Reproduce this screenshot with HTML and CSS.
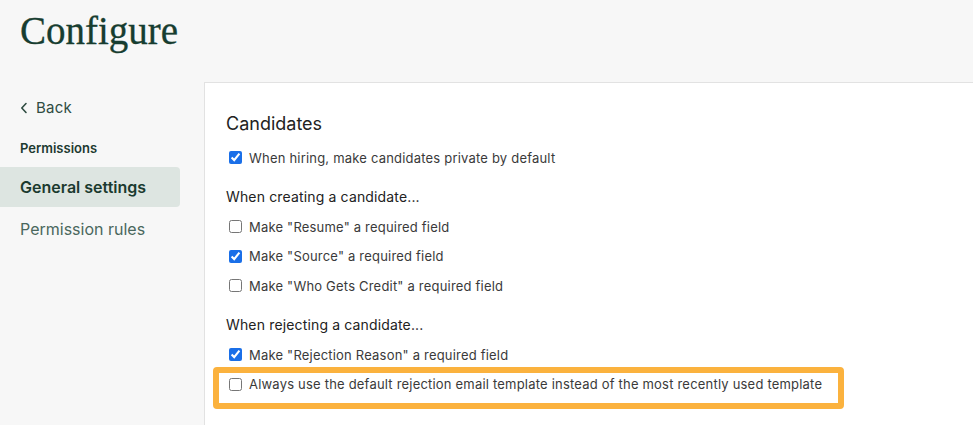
FILE: index.html
```html
<!DOCTYPE html>
<html lang="en">
<head>
<meta charset="utf-8">
<title>Configure</title>
<link rel="stylesheet" href="styles.css">
</head>
<body>
<header class="page-header">
  <h1 class="page-title">Configure</h1>
</header>
<div class="layout">
  <aside class="sidebar">
    <a class="back-link" href="#">
      <svg class="chev" width="8" height="12" viewBox="0 0 8 12" aria-hidden="true"><path d="M6 1.5 L1.8 6 L6 10.5" fill="none" stroke="currentColor" stroke-width="1.6" stroke-linecap="round" stroke-linejoin="round"/></svg>
      <span>Back</span>
    </a>
    <div class="side-heading">Permissions</div>
    <nav class="side-nav">
      <a class="nav-item active" href="#">General settings</a>
      <a class="nav-item" href="#">Permission rules</a>
    </nav>
  </aside>
  <main class="panel">
    <h2 class="section-title">Candidates</h2>
    <label class="row"><input type="checkbox" checked><span>When hiring, make candidates private by default</span></label>

    <h3 class="sub-heading">When creating a candidate...</h3>
    <label class="row"><input type="checkbox"><span>Make "Resume" a required field</span></label>
    <label class="row"><input type="checkbox" checked><span>Make "Source" a required field</span></label>
    <label class="row"><input type="checkbox"><span>Make "Who Gets Credit" a required field</span></label>

    <h3 class="sub-heading">When rejecting a candidate...</h3>
    <label class="row"><input type="checkbox" checked><span>Make "Rejection Reason" a required field</span></label>
    <label class="row highlighted"><input type="checkbox"><span>Always use the default rejection email template instead of the most recently used template</span></label>
  </main>
</div>
</body>
</html>
```

FILE: styles.css
```css
*, *::before, *::after { box-sizing: border-box; }

html, body {
  margin: 0;
  padding: 0;
  height: 100%;
}

body {
  background: #f7f7f7;
  font-family: Inter, "Liberation Sans", Arial, sans-serif;
  color: #333;
  display: flex;
  flex-direction: column;
  overflow: hidden;
}

.page-header {
  height: 82px;
  padding: 8px 0 0 20px;
}

.page-title {
  margin: 0;
  font-family: "Liberation Serif", "Times New Roman", serif;
  font-weight: 400;
  font-size: 39px;
  line-height: 46px;
  color: #173d30;
  -webkit-text-stroke: 0.3px #173d30;
}

.layout {
  flex: 1;
  display: flex;
}

.sidebar {
  width: 204px;
  flex: none;
  padding-top: 16px;
}

.back-link {
  display: flex;
  align-items: center;
  gap: 8px;
  height: 18px;
  padding-left: 20px;
  color: #2f4c42;
  font-size: 15px;
  letter-spacing: 0.2px;
  text-decoration: none;
}

.chev { display: block; margin-top: 1px; }

.side-heading {
  margin-top: 24px;
  padding-left: 20px;
  font-size: 13px;
  line-height: 16px;
  font-weight: 600;
  color: #1d3a30;
}

.side-nav {
  margin-top: 11px;
  display: flex;
  flex-direction: column;
  gap: 2px;
}

.nav-item {
  display: flex;
  align-items: center;
  width: 180px;
  height: 40px;
  padding-left: 20px;
  font-size: 16px;
  color: #4a675d;
  text-decoration: none;
  border-radius: 0 4px 4px 0;
}

.nav-item.active {
  background: #dde5e1;
  color: #1b3a2f;
  font-weight: 600;
}

.panel {
  flex: 1;
  background: #fff;
  border-top: 1px solid #e2e2e2;
  border-left: 1px solid #e2e2e2;
  padding: 29px 0 0 21px;
}

.section-title {
  margin: 0;
  font-size: 18px;
  line-height: 24px;
  font-weight: 400;
  color: #222;
}

.sub-heading {
  margin: 14px 0 5.5px;
  font-size: 14px;
  line-height: 20px;
  font-weight: 400;
  letter-spacing: 0.15px;
  color: #222;
}

.row {
  position: relative;
  display: flex;
  align-items: center;
  gap: 7px;
  height: 29.5px;
  font-size: 13px;
  letter-spacing: 0.2px;
  color: #3a3a3a;
}

.section-title + .row { margin-top: 7px; }

.row input {
  margin: 0 0 0 3px;
  width: 13px;
  height: 13px;
  accent-color: #1a6fe8;
}

.highlighted::after {
  content: "";
  position: absolute;
  left: -13px;
  top: -3px;
  width: 631px;
  height: 42px;
  border: 6px solid #fbb23e;
  border-radius: 4px;
  pointer-events: none;
}
```
